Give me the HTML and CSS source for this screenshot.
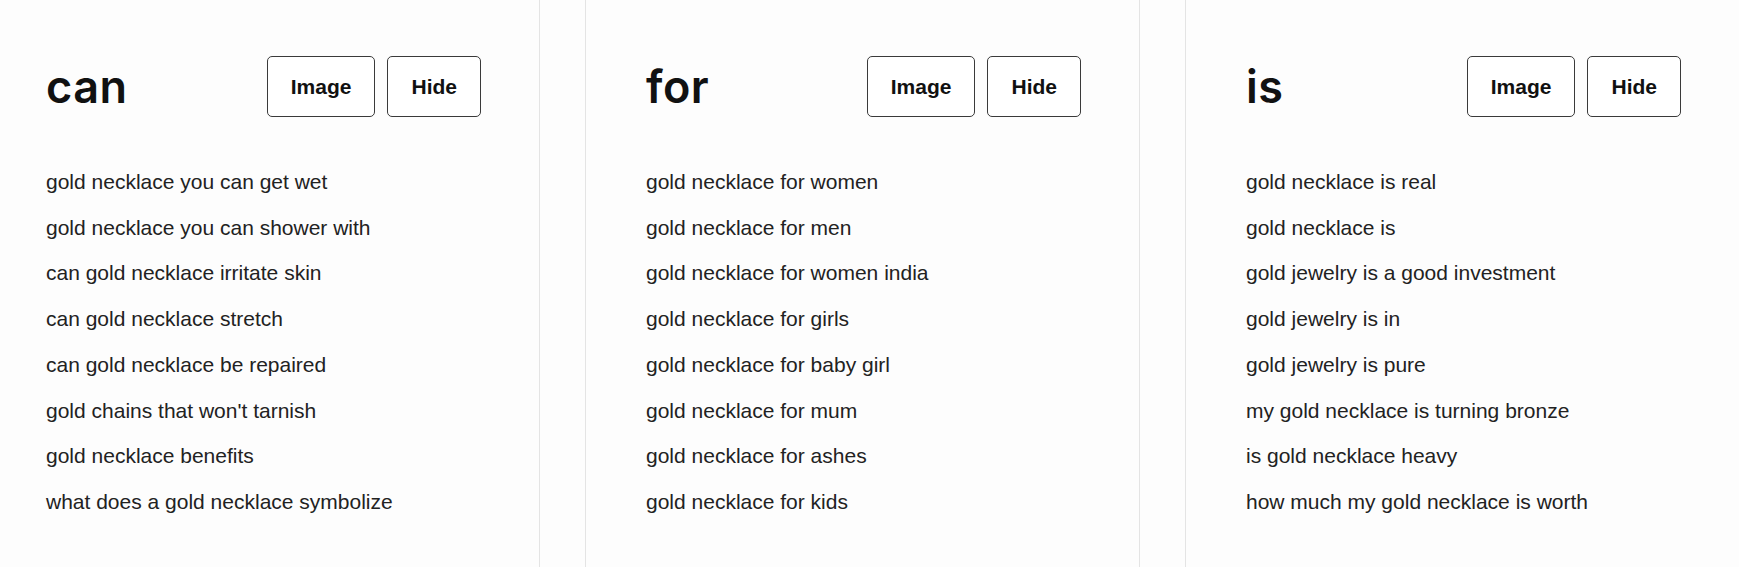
FILE: index.html
```html
<!DOCTYPE html>
<html>
<head>
<meta charset="utf-8">
<link rel="stylesheet" href="styles.css">
</head>
<body>
<div class="board">
  <section class="card">
    <div class="card-head">
      <h2 class="title">can</h2>
      <div class="actions">
        <button class="btn">Image</button>
        <button class="btn">Hide</button>
      </div>
    </div>
    <ul class="list">
      <li>gold necklace you can get wet</li>
      <li>gold necklace you can shower with</li>
      <li>can gold necklace irritate skin</li>
      <li>can gold necklace stretch</li>
      <li>can gold necklace be repaired</li>
      <li>gold chains that won't tarnish</li>
      <li>gold necklace benefits</li>
      <li>what does a gold necklace symbolize</li>
    </ul>
  </section>
  <section class="card">
    <div class="card-head">
      <h2 class="title">for</h2>
      <div class="actions">
        <button class="btn">Image</button>
        <button class="btn">Hide</button>
      </div>
    </div>
    <ul class="list">
      <li>gold necklace for women</li>
      <li>gold necklace for men</li>
      <li>gold necklace for women india</li>
      <li>gold necklace for girls</li>
      <li>gold necklace for baby girl</li>
      <li>gold necklace for mum</li>
      <li>gold necklace for ashes</li>
      <li>gold necklace for kids</li>
    </ul>
  </section>
  <section class="card">
    <div class="card-head">
      <h2 class="title">is</h2>
      <div class="actions">
        <button class="btn">Image</button>
        <button class="btn">Hide</button>
      </div>
    </div>
    <ul class="list">
      <li>gold necklace is real</li>
      <li>gold necklace is</li>
      <li>gold jewelry is a good investment</li>
      <li>gold jewelry is in</li>
      <li>gold jewelry is pure</li>
      <li>my gold necklace is turning bronze</li>
      <li>is gold necklace heavy</li>
      <li>how much my gold necklace is worth</li>
    </ul>
  </section>
</div>
</body>
</html>
```

FILE: styles.css
```css
html, body {
  margin: 0;
  padding: 0;
  background: #fdfdfd;
  overflow: hidden;
}

body {
  font-family: "Liberation Sans", Arial, sans-serif;
  color: #222;
}

.board {
  display: flex;
  gap: 45px;
  margin-left: -15px;
}

.card {
  flex: 0 0 555px;
  box-sizing: border-box;
  min-height: 620px;
  padding: 56px 58px 0 60px;
  border-left: 1px solid #e4e4e4;
  border-right: 1px solid #e4e4e4;
  background: #fdfdfd;
}

.card-head {
  display: flex;
  align-items: center;
  justify-content: space-between;
  height: 61px;
}

.title {
  margin: 0;
  font-family: Inter, "Liberation Sans", sans-serif;
  font-weight: 600;
  font-size: 45px;
  line-height: 1;
  color: #111;
  letter-spacing: 0.5px;
}

.actions {
  display: flex;
  gap: 12px;
}

.btn {
  height: 61px;
  padding: 0 23px;
  border: 1px solid #3a3a3a;
  border-radius: 5px;
  background: #fff;
  font-family: "Liberation Sans", Arial, sans-serif;
  font-weight: 700;
  font-size: 21px;
  color: #111;
}

.list {
  list-style: none;
  margin: 42px 0 0 0;
  padding: 0;
}

.list li {
  font-size: 21px;
  line-height: 45.7px;
  color: #222;
}
```
